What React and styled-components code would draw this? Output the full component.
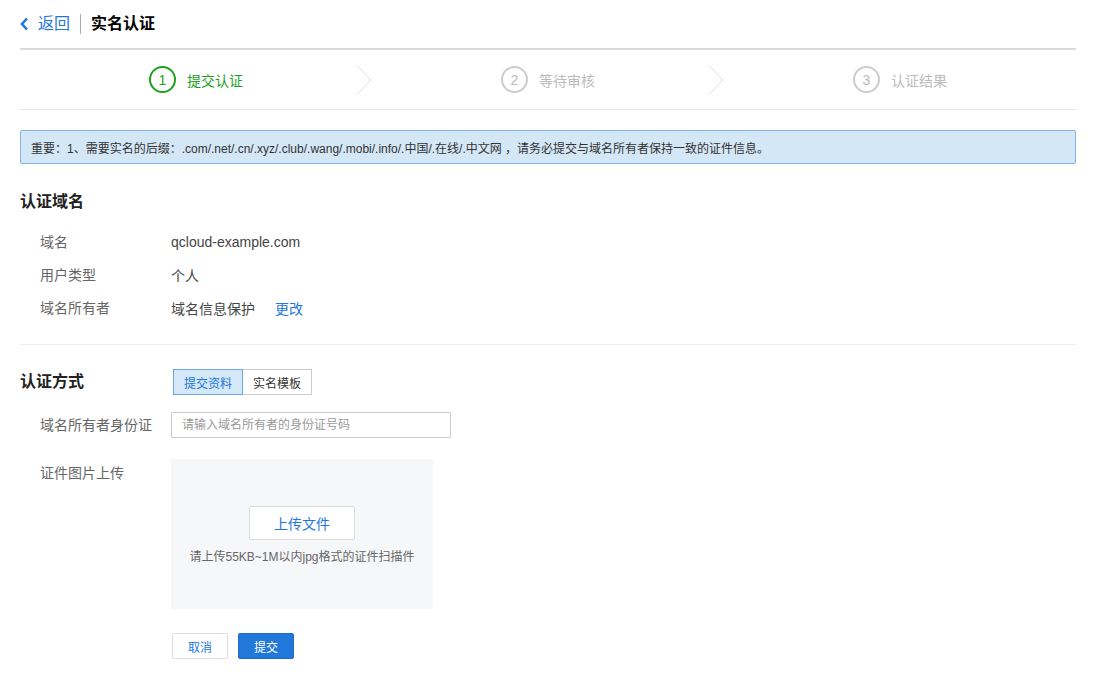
import styled, { createGlobalStyle } from "styled-components";

const GlobalStyle = createGlobalStyle`
  body {
    margin: 0;
    background: #fff;
    font-family: "Liberation Sans", "Noto Sans CJK SC", sans-serif;
    color: #333;
  }
  * { box-sizing: border-box; }
`;

const Page = styled.div`
  padding: 0 19px 0 20px;
`;

const TopBar = styled.header`
  height: 50px;
  display: flex;
  align-items: center;
  border-bottom: 2px solid #d9d9d9;
  padding-bottom: 1px;
`;

const BackLink = styled.a`
  display: flex;
  align-items: center;
  gap: 8px;
  color: #2277da;
  font-size: 16px;
  line-height: 20px;
  cursor: pointer;
`;

const Divider = styled.span`
  width: 1px;
  height: 20px;
  background: #aaa;
  margin: 0 10px;
`;

const Title = styled.h1`
  margin: 0;
  font-size: 16px;
  font-weight: bold;
  line-height: 20px;
  color: #000;
`;

const Steps = styled.div`
  display: grid;
  grid-template-columns: repeat(3, 1fr);
  height: 60px;
  border-bottom: 1px solid #e5e5e5;
`;

const Step = styled.div`
  position: relative;
  display: flex;
  align-items: center;
  justify-content: center;
  gap: 11px;
  color: ${(p) => (p.$active ? "#1da11d" : "#bbb")};
  font-size: 14px;
`;

const Circle = styled.span`
  width: 27px;
  height: 27px;
  border-radius: 50%;
  border: 2px solid ${(p) => (p.$active ? "#1da11d" : "#ccc")};
  display: flex;
  align-items: center;
  justify-content: center;
  font-size: 14px;
  line-height: 1;
  color: ${(p) => (p.$active ? "#1da11d" : "#bbb")};
`;

const Arrow = styled.svg`
  position: absolute;
  right: 0;
  top: 14px;
`;

const Notice = styled.div`
  margin-top: 20px;
  height: 34px;
  display: flex;
  align-items: center;
  padding-left: 10px;
  background: #d4e7f7;
  border: 1px solid #85b4e3;
  border-radius: 2px;
  font-size: 12px;
  color: #333;
`;

const Section = styled.section`
  padding: ${(p) => p.$pad || "0"};
  border-bottom: ${(p) => (p.$line ? "1px solid #ececec" : "none")};
`;

const Heading = styled.h2`
  margin: 0;
  font-size: 16px;
  font-weight: bold;
  line-height: 24px;
  color: #222;
  width: 153px;
  flex-shrink: 0;
`;

const InfoList = styled.div`
  margin-top: 11px;
  padding-left: 20px;
`;

const InfoRow = styled.div`
  display: flex;
  align-items: center;
  height: 33px;
  font-size: 14px;
`;

const Label = styled.span`
  width: 131px;
  flex-shrink: 0;
  color: #666;
  font-size: 14px;
  line-height: 20px;
  align-self: ${(p) => (p.$top ? "flex-start" : "center")};
  padding-top: ${(p) => (p.$top ? "4px" : "0")};
`;

const Value = styled.span`
  color: #444;
`;

const Link = styled.a`
  color: #2277da;
  margin-left: 20px;
  cursor: pointer;
`;

const HeadRow = styled.div`
  display: flex;
  align-items: center;
`;

const Tabs = styled.div`
  display: flex;
`;

const Tab = styled.button`
  width: 70px;
  height: 26px;
  font-family: inherit;
  font-size: 12px;
  padding: 0;
  margin-left: ${(p) => (p.$active ? "0" : "-1px")};
  border: 1px solid ${(p) => (p.$active ? "#6ea6e0" : "#ccc")};
  background: ${(p) => (p.$active ? "#d5e8f8" : "#fff")};
  color: ${(p) => (p.$active ? "#2277da" : "#333")};
  position: relative;
  z-index: ${(p) => (p.$active ? 1 : 0)};
`;

const FormRow = styled.div`
  display: flex;
  align-items: ${(p) => (p.$top ? "flex-start" : "center")};
  padding-left: 20px;
  margin-top: ${(p) => p.$mt || "0"};
`;

const Input = styled.input`
  width: 280px;
  height: 26px;
  border: 1px solid #ccc;
  border-radius: 1px;
  padding: 0 10px;
  font-family: inherit;
  font-size: 12px;
  color: #333;
  &::placeholder { color: #999; }
`;

const UploadBox = styled.div`
  width: 262px;
  height: 150px;
  background: #f6f7f9;
  display: flex;
  flex-direction: column;
  align-items: center;
  justify-content: center;
  gap: 9px;
  padding-top: 3px;
`;

const UploadButton = styled.button`
  width: 106px;
  height: 34px;
  background: #fff;
  border: 1px solid #ddd;
  border-radius: 2px;
  color: #2277da;
  font-family: inherit;
  font-size: 14px;
`;

const Hint = styled.span`
  font-size: 12px;
  color: #666;
  line-height: 16px;
`;

const Actions = styled.div`
  display: flex;
  gap: 10px;
  margin: 24px 0 0 152px;
`;

const Button = styled.button`
  width: 56px;
  height: 26px;
  font-family: inherit;
  font-size: 12px;
  border-radius: 2px;
  border: 1px solid ${(p) => (p.$primary ? "#1c6ccc" : "#ddd")};
  background: ${(p) => (p.$primary ? "#2277da" : "#fff")};
  color: ${(p) => (p.$primary ? "#fff" : "#2277da")};
`;

const ChevronLeft = () => (
  <svg width="10" height="14" viewBox="0 0 10 14">
    <path d="M7 1.5 L2 7 L7 12.5" fill="none" stroke="#2277da" strokeWidth="2.6" />
  </svg>
);

const StepArrow = () => (
  <Arrow width="16" height="32" viewBox="0 0 16 32">
    <path d="M0.5 1 L15 16 L0.5 31" fill="none" stroke="#dcdfe3" strokeWidth="1" />
  </Arrow>
);

const steps = ["提交认证", "等待审核", "认证结果"];

const info = [
  { label: "域名", value: "qcloud-example.com" },
  { label: "用户类型", value: "个人" },
  { label: "域名所有者", value: "域名信息保护", link: "更改" },
];

export default function App() {
  return (
    <Page>
      <GlobalStyle />
      <TopBar>
        <BackLink>
          <ChevronLeft />
          返回
        </BackLink>
        <Divider />
        <Title>实名认证</Title>
      </TopBar>

      <Steps>
        {steps.map((s, i) => (
          <Step key={s} $active={i === 0}>
            <Circle $active={i === 0}>{i + 1}</Circle>
            {s}
            {i < 2 && <StepArrow />}
          </Step>
        ))}
      </Steps>

      <Notice>
        重要：1、需要实名的后缀：.com/.net/.cn/.xyz/.club/.wang/.mobi/.info/.中国/.在线/.中文网 ，请务必提交与域名所有者保持一致的证件信息。
      </Notice>

      <Section $line $pad="26px 0 20px">
        <Heading>认证域名</Heading>
        <InfoList>
          {info.map((r) => (
            <InfoRow key={r.label}>
              <Label>{r.label}</Label>
              <Value>{r.value}</Value>
              {r.link && <Link>{r.link}</Link>}
            </InfoRow>
          ))}
        </InfoList>
      </Section>

      <Section $pad="24px 0 30px">
        <HeadRow>
          <Heading>认证方式</Heading>
          <Tabs>
            <Tab $active>提交资料</Tab>
            <Tab>实名模板</Tab>
          </Tabs>
        </HeadRow>

        <FormRow $mt="17px">
          <Label>域名所有者身份证</Label>
          <Input placeholder="请输入域名所有者的身份证号码" />
        </FormRow>

        <FormRow $top $mt="21px">
          <Label $top>证件图片上传</Label>
          <UploadBox>
            <UploadButton>上传文件</UploadButton>
            <Hint>请上传55KB~1M以内jpg格式的证件扫描件</Hint>
          </UploadBox>
        </FormRow>

        <Actions>
          <Button>取消</Button>
          <Button $primary>提交</Button>
        </Actions>
      </Section>
    </Page>
  );
}
